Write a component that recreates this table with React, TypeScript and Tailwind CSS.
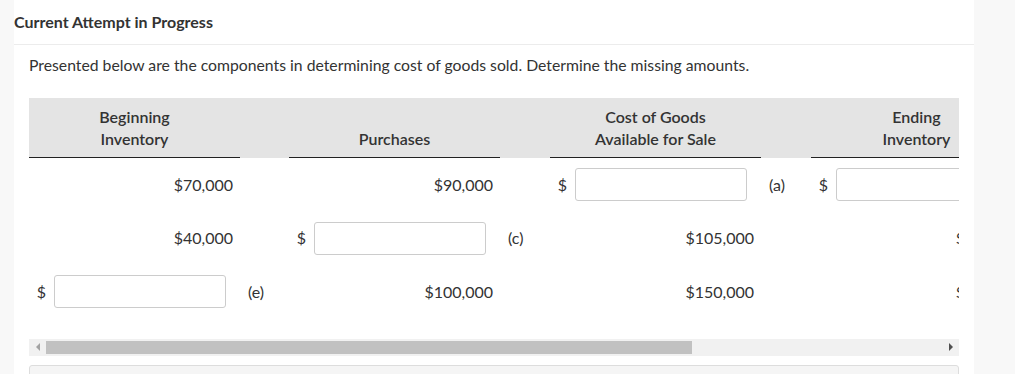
import React from "react";

type Cell = { kind: "text"; value: string } | { kind: "input" };

const rows: { cells: Cell[]; labels: string[] }[] = [
  {
    cells: [
      { kind: "text", value: "$70,000" },
      { kind: "text", value: "$90,000" },
      { kind: "input" },
      { kind: "input" },
    ],
    labels: ["", "", "(a)"],
  },
  {
    cells: [
      { kind: "text", value: "$40,000" },
      { kind: "input" },
      { kind: "text", value: "$105,000" },
      { kind: "text", value: "$65,000" },
    ],
    labels: ["", "(c)", ""],
  },
  {
    cells: [
      { kind: "input" },
      { kind: "text", value: "$100,000" },
      { kind: "text", value: "$150,000" },
      { kind: "text", value: "$90,000" },
    ],
    labels: ["(e)", "", ""],
  },
];

const headers = [
  ["Beginning", "Inventory"],
  ["Purchases"],
  ["Cost of Goods", "Available for Sale"],
  ["Ending", "Inventory"],
];

const gapWidths = ["w-[49px]", "w-[50px]", "w-[50px]"];

const ValueCell = ({ cell }: { cell: Cell }) => {
  if (cell.kind === "text") {
    return <div className="w-[211px] shrink-0 flex items-center justify-end pr-[7px]">{cell.value}</div>;
  }
  return (
    <div className="w-[211px] shrink-0 flex items-center justify-end pr-[14px]">
      <span className="mr-[8px]">$</span>
      <input type="text" className="w-[172px] h-[33px] border border-[#cccccc] rounded-[3px] bg-white outline-none" />
    </div>
  );
};

export default function App() {
  return (
    <div className="flex min-h-[374px] bg-[#f8f8f8] text-[#333333]" style={{ fontFamily: "Lato, 'Noto Sans', sans-serif" }}>
      <div className="w-[14px] shrink-0" />
      <div className="w-[960px] shrink-0 bg-white">
        <div className="pt-[10px] pb-[10px] text-[16px] font-bold leading-[24px] text-[#333333] border-b border-[#ececec]">
          Current Attempt in Progress
        </div>
        <div className="pl-[15px] pr-[15px]">
          <p className="mt-[9px] text-[15.75px] leading-[22px]">
            Presented below are the components in determining cost of goods sold. Determine the missing amounts.
          </p>

          <div className="mt-[22px] w-[930px] overflow-hidden text-[16px]">
            <div className="w-[995px]">
              {/* header */}
              <div className="flex h-[60px] bg-[#e4e4e4]">
                {headers.map((h, i) => (
                  <React.Fragment key={i}>
                    <div className="w-[211px] shrink-0 flex flex-col items-center justify-end pb-[7px] border-b border-[#222222] leading-[22px] font-semibold text-[#333333]">
                      {h.map((line) => (
                        <span key={line}>{line}</span>
                      ))}
                    </div>
                    {i < 3 && <div className={`${gapWidths[i]} shrink-0`} />}
                  </React.Fragment>
                ))}
              </div>

              {/* rows */}
              {rows.map((row, r) => (
                <div key={r} className="flex h-[53.5px]">
                  {row.cells.map((cell, i) => (
                    <React.Fragment key={i}>
                      <ValueCell cell={cell} />
                      {i < 3 && (
                        <div className={`${gapWidths[i]} shrink-0 flex items-center pl-[8px]`}>{row.labels[i]}</div>
                      )}
                    </React.Fragment>
                  ))}
                </div>
              ))}
            </div>
          </div>

          {/* scrollbar */}
          <div className="mt-[20px] w-[930px] h-[17px] bg-[#f1f1f1] flex items-center">
            <div className="w-[17px] h-[17px] flex items-center justify-center">
              <div className="w-0 h-0 border-y-[4px] border-y-transparent border-r-[4px] border-r-[#a3a3a3]" />
            </div>
            <div className="w-[646px] h-[13px] bg-[#c1c1c1]" />
            <div className="flex-1" />
            <div className="w-[17px] h-[17px] flex items-center justify-center">
              <div className="w-0 h-0 border-y-[4px] border-y-transparent border-l-[4px] border-l-[#505050]" />
            </div>
          </div>

          <div className="mt-[9px] w-[930px] h-[20px] border border-[#dddddd] rounded-t-[3px] bg-[#f5f5f5]" />
        </div>
      </div>
    </div>
  );
}
